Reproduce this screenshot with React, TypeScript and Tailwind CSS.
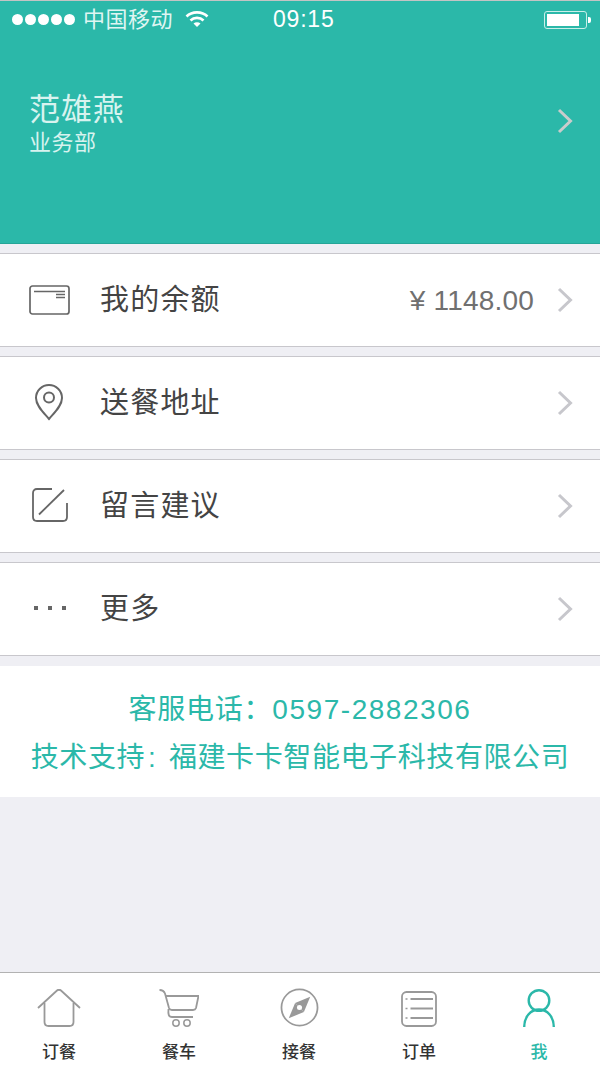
import React from "react";

const FONT = { fontFamily: '"Liberation Sans", "Noto Sans CJK SC", sans-serif' };

function Chevron({ className }: { className: string }) {
  return (
    <svg width="16" height="26" viewBox="0 0 16 26" fill="none" className={className}>
      <path d="M2 2 L13.5 13 L2 24" stroke="currentColor" strokeWidth="3" />
    </svg>
  );
}

function Row({ icon, label, value }: { icon: React.ReactNode; label: string; value?: string }) {
  return (
    <div className="h-[94px] bg-white border-y border-[#c8c7cc] flex items-center pl-[28px] pr-[28px]">
      <div className="w-[44px] flex justify-center shrink-0">{icon}</div>
      <div className="ml-[28px] text-[29px] leading-none text-[#444444] tracking-[1.2px]">{label}</div>
      <div className="flex-1" />
      {value && <div className="text-[28px] leading-none text-[#707070] mr-[23px] mt-[1px] tracking-[0.2px]">{value}</div>}
      <Chevron className="text-[#c7c7cc] mr-[-1px] -mt-[1px]" />
    </div>
  );
}

function Tab({ icon, label, active }: { icon: React.ReactNode; label: string; active?: boolean }) {
  return (
    <div className="flex-1 flex flex-col items-center pt-[16px] pr-[2px]">
      <div className="h-[38px] flex items-end justify-center">{icon}</div>
      <div className={`mt-[15px] text-[17px] leading-[22px] font-medium ${active ? "text-[#2bb8a9]" : "text-[#333333]"}`}>{label}</div>
    </div>
  );
}

export default function App() {
  return (
    <div className="w-[600px] h-[1065px] bg-[#efeff4] flex flex-col overflow-hidden" style={FONT}>
      <div className="h-[244px] bg-[#2bb8a9] border-t border-[#c4c4c4] border-b-[#25a597] border-b flex flex-col shrink-0 text-white">
        <div className="h-[37px] flex items-center pl-[12px] pr-[10px] relative">
          <div className="flex gap-[2px]">
            {[0, 1, 2, 3, 4].map((i) => (
              <div key={i} className="w-[11px] h-[11px] rounded-full bg-white" />
            ))}
          </div>
          <div className="ml-[8px] text-[22px] leading-none text-[#dff5f2] tracking-[0.5px]">中国移动</div>
          <svg width="24" height="18" viewBox="0 0 24 18" className="ml-[12px] -mt-[1px]" fill="none" stroke="white" strokeWidth="2.6">
            <path d="M1.5 6.5 C7 1 17 1 22.5 6.5" />
            <path d="M5.5 10.5 C9 7 15 7 18.5 10.5" />
            <path d="M12 17 L8.5 13.5 C10.5 11.8 13.5 11.8 15.5 13.5 Z" fill="white" stroke="none" />
          </svg>
          <div className="absolute left-[273px] top-[5px] text-[23px] leading-[26px] text-white tracking-[0.8px]">09:15</div>
          <div className="flex-1" />
          <div className="flex items-center mr-[-1px]">
            <div className="w-[43px] h-[18px] border border-[#c9efe9] rounded-[3px] p-[2px]">
              <div className="w-[32px] h-full bg-white" />
            </div>
            <div className="w-[3px] h-[6px] bg-white rounded-r-[2px] ml-[1px]" />
          </div>
        </div>
        <div className="flex items-center pl-[29px] pr-[27px] mt-[53px]">
          <div>
            <div className="text-[31px] leading-[38px] text-[#d8f3ef] tracking-[0.9px]">范雄燕</div>
            <div className="text-[22px] leading-[28px] text-[#d8f3ef] tracking-[0.5px]">业务部</div>
          </div>
          <div className="flex-1" />
          <Chevron className="text-[#c9cccc] -mt-[6px]" />
        </div>
      </div>

      <div className="flex flex-col gap-[9px] mt-[9px] shrink-0">
        <Row
          label="我的余额"
          value="¥ 1148.00"
          icon={
            <svg width="41" height="30" viewBox="0 0 41 30" fill="none" stroke="#666666" strokeWidth="1.7" className="-mt-[1px] -ml-[1px]">
              <rect x="1" y="1" width="39" height="28" rx="2.5" />
              <path d="M5 6.5 H36 M27 9.5 H36 M27 12.5 H36" strokeWidth="1.3" />
            </svg>
          }
        />
        <Row
          label="送餐地址"
          icon={
            <svg width="30" height="38" viewBox="0 0 30 38" fill="none" stroke="#666666" strokeWidth="2" className="-mt-[3px] -ml-[2px]">
              <path d="M15 36 C10 30 2 23 2 15 C2 7.5 8 2 15 2 C22 2 28 7.5 28 15 C28 23 20 30 15 36 Z" />
              <circle cx="15" cy="14.5" r="5" />
            </svg>
          }
        />
        <Row
          label="留言建议"
          icon={
            <svg width="36" height="34" viewBox="0 0 36 34" fill="none" stroke="#666666" strokeWidth="1.8" className="-mt-[2px]">
              <path d="M20 1 H5 C2.5 1 1 2.5 1 5 V29 C1 31.5 2.5 33 5 33 H31 C33.5 33 35 31.5 35 29 V15" />
              <path d="M7 26.5 L32 2" />
            </svg>
          }
        />
        <Row
          label="更多"
          icon={
            <svg width="32" height="6" viewBox="0 0 32 6" fill="#666666" className="-mt-[2px]">
              <rect x="0" y="1" width="4" height="4" />
              <rect x="14" y="1" width="4" height="4" />
              <rect x="28" y="1" width="4" height="4" />
            </svg>
          }
        />
      </div>

      <div className="mt-[10px] h-[131px] bg-white shrink-0 flex flex-col items-center pt-[20px] text-[#2bb8a9]">
        <div className="text-[28px] leading-[48px] tracking-[0.75px] whitespace-nowrap">
          客服电话：<span className="tracking-[1.55px]">0597-2882306</span>
        </div>
        <div className="text-[28px] leading-[48px] tracking-[0.6px] whitespace-nowrap">
          技术支持<span className="ml-[3px] mr-[4px]">:</span> 福建卡卡智能电子科技有限公司
        </div>
      </div>

      <div className="flex-1" />

      <div className="h-[93px] bg-white border-t border-[#b2b2b2] flex shrink-0">
        <Tab
          label="订餐"
          icon={
            <svg width="44" height="38" viewBox="0 0 44 38" fill="none" stroke="#999999" strokeWidth="1.8">
              <path d="M1 19 L20 1.5 C21 0.7 23 0.7 24 1.5 L43 19" />
              <path d="M7.5 14 V33 C7.5 35.5 9 37 11.5 37 H32.5 C35 37 36.5 35.5 36.5 33 V14" />
            </svg>
          }
        />
        <Tab
          label="餐车"
          icon={
            <svg width="40" height="38" viewBox="0 0 40 38" fill="none" stroke="#999999" strokeWidth="1.8">
              <path d="M0.5 1 C4 1 5 2 6 4.5 L10 19 C10.5 20.5 11.5 21 13 21 L34 21 C35.5 21 36.5 20.5 37 19 L39.5 7 H6" />
              <path d="M9.5 20 C9 25 9.5 28 13 28 H34" />
              <circle cx="17" cy="34" r="3.2" strokeWidth="1.5" />
              <circle cx="28" cy="34" r="3.2" strokeWidth="1.5" />
            </svg>
          }
        />
        <Tab
          label="接餐"
          icon={
            <svg width="39" height="39" viewBox="0 0 40 40" fill="none">
              <circle cx="20" cy="20" r="18.5" stroke="#999999" strokeWidth="1.8" />
              <path d="M31 9 L24.5 24.5 L15.5 15.5 Z" fill="#999999" />
              <path d="M9 31 L15.5 15.5 L24.5 24.5 Z" fill="#999999" />
              <circle cx="20" cy="20" r="2.6" fill="white" />
            </svg>
          }
        />
        <Tab
          label="订单"
          icon={
            <svg width="36" height="36" viewBox="0 0 36 36" fill="none" stroke="#999999" strokeWidth="1.8">
              <rect x="1" y="1" width="34" height="34" rx="4.5" />
              <path d="M9.5 8 H32 M9.5 17.5 H32 M9.5 27 H32" />
              <path d="M4.5 8 H6.5 M4.5 17.5 H6.5 M4.5 27 H6.5" strokeWidth="1.4" />
            </svg>
          }
        />
        <Tab
          label="我"
          active
          icon={
            <svg width="32" height="38" viewBox="0 0 32 38" fill="none" stroke="#2bb8a9" strokeWidth="2.4">
              <circle cx="16" cy="11.5" r="10.3" />
              <path d="M1.2 38 C1.2 28 7.5 20.5 16 20.5 C24.5 20.5 30.8 28 30.8 38" />
            </svg>
          }
        />
      </div>
    </div>
  );
}
